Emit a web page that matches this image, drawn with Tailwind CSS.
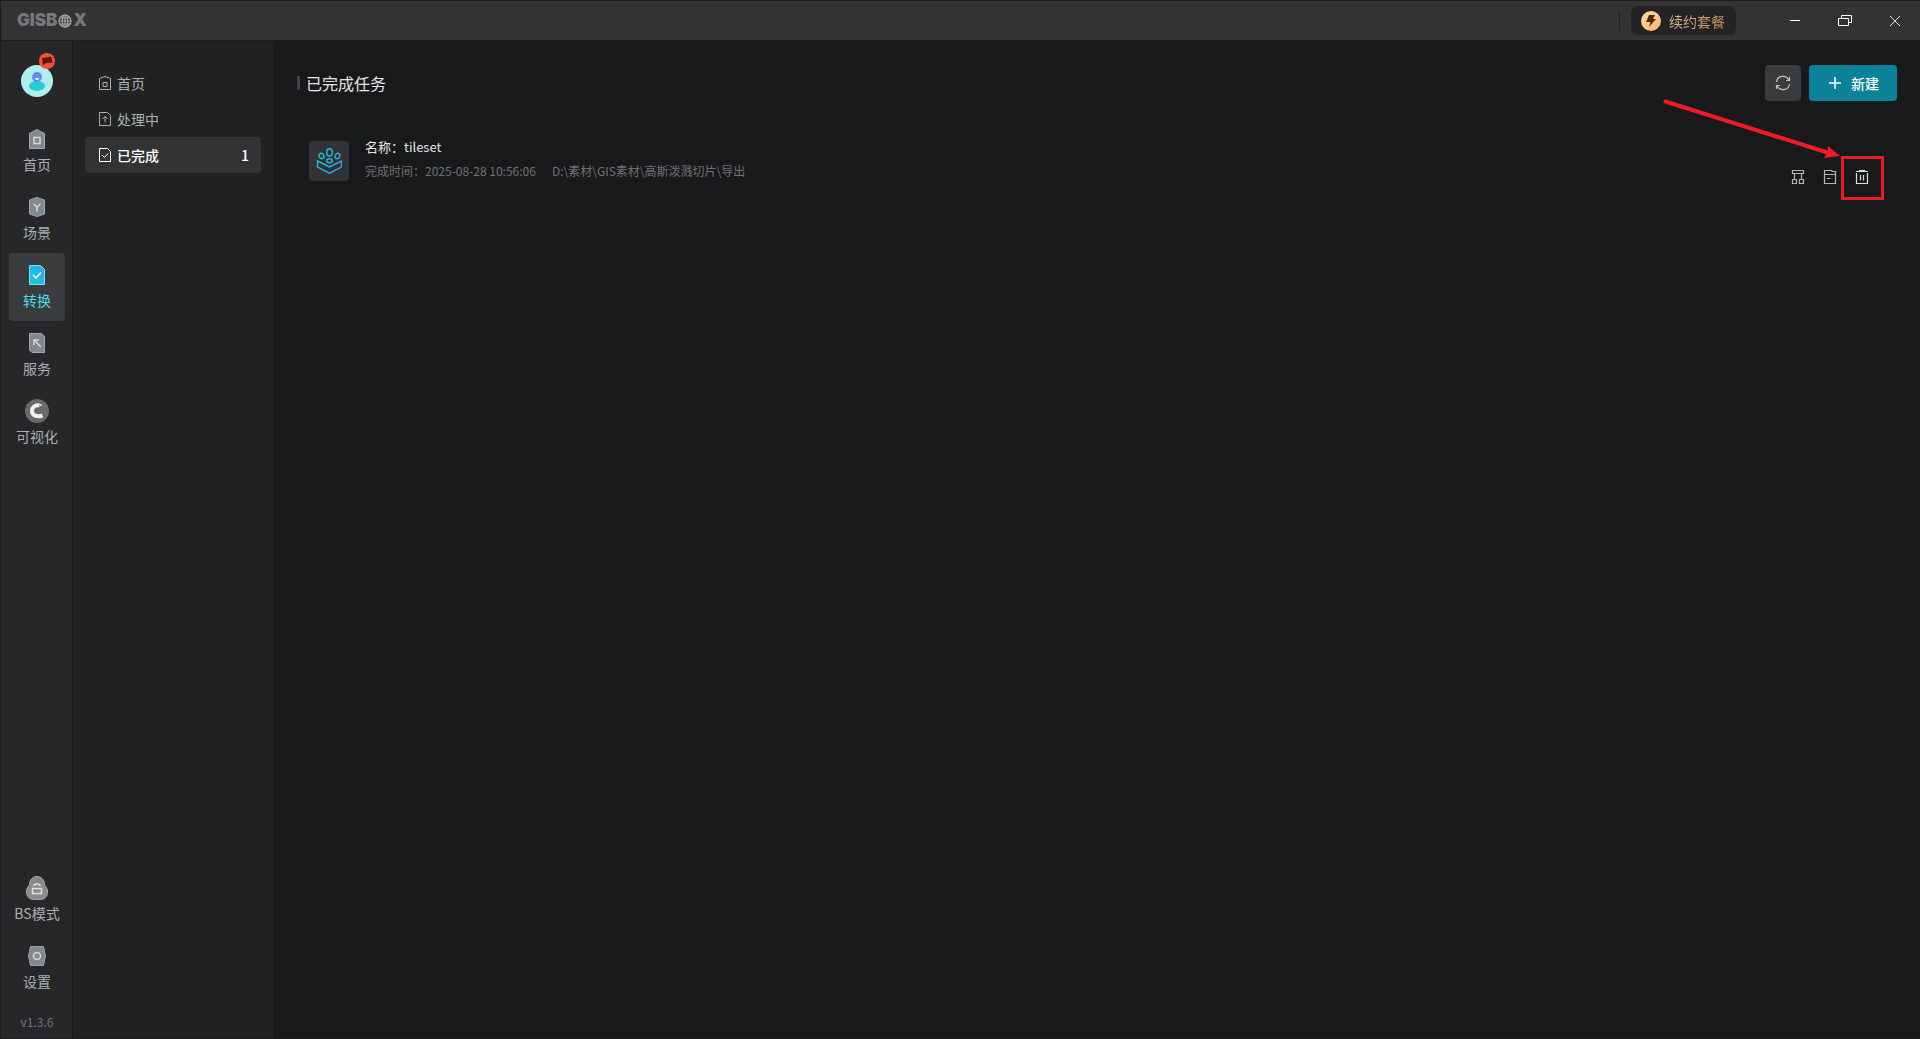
<!DOCTYPE html>
<html lang="zh-CN">
<head>
    <meta charset="UTF-8">
    <meta name="viewport" content="width=device-width, initial-scale=1.0">
    <title>GISBOX</title>
    <script src="https://cdn.jsdelivr.net/npm/@tailwindcss/browser@4"></script>
</head>
<body class="flex flex-col h-screen overflow-hidden border-l border-b border-[#1c1d1e] bg-[#18191b] font-['Noto_Sans_CJK_SC','Noto_Sans',sans-serif] text-sm text-[#a9b0b3]">

    <!-- Title bar -->
    <header class="flex items-center shrink-0 h-[41px] pl-4 border-t border-b border-[#1c1d1e] bg-[#323335]">
        <div class="flex items-center gap-px font-['Inter',sans-serif] text-[17px] leading-none font-black text-[#77787a]">
            <span>GISB</span>
            <svg class="w-[14px] h-[14px]" viewBox="0 0 14 14" fill="none" stroke="#a6a7a8" stroke-width="1.2">
                <circle cx="7" cy="7" r="6"/>
                <ellipse cx="7" cy="7" rx="2.8" ry="6"/>
                <path d="M7 1v12M1 7h12M2 4h10M2 10h10"/>
            </svg>
            <span>X</span>
        </div>
        <div class="ml-auto w-px h-5 bg-[#1f2021]"></div>
        <button class="flex items-center gap-2 ml-[10px] h-[31px] w-[107px] pl-[10px] rounded-lg border border-[#3d322b] bg-[#232224]">
            <svg class="w-5 h-5" viewBox="0 0 20 20">
                <defs>
                    <linearGradient id="gold" x1="0" y1="0" x2="1" y2="1">
                        <stop offset="0" stop-color="#ffe0ab"/>
                        <stop offset="1" stop-color="#fdb06b"/>
                    </linearGradient>
                </defs>
                <circle cx="10" cy="10" r="10" fill="url(#gold)"/>
                <path d="M8 4h6l-2 4h3l-7 8 1.500-5H5z" fill="#4a2a12"/>
            </svg>
            <span class="bg-linear-to-r from-[#d6bd90] to-[#c28d5c] bg-clip-text text-transparent">续约套餐</span>
        </button>
        <div class="flex ml-[33px]">
            <button aria-label="最小化" class="grid place-items-center w-[50px] h-10">
                <svg class="w-[14px] h-[14px]" viewBox="0 0 14 14" fill="none" stroke="#fff"><path d="M2 6.500h10"/></svg>
            </button>
            <button aria-label="还原" class="grid place-items-center w-[50px] h-10">
                <svg class="w-[14px] h-[14px]" viewBox="0 0 14 14" fill="none" stroke="#fff"><path d="M.5 4.500h10v7H.5zM3.500 4.500v-3h10v7h-3"/></svg>
            </button>
            <button aria-label="关闭" class="grid place-items-center w-[50px] h-10">
                <svg class="w-[14px] h-[14px]" viewBox="0 0 14 14" fill="none" stroke="#ddd"><path d="M2 2l10 10M12 2L2 12"/></svg>
            </button>
        </div>
    </header>

    <div class="flex flex-1 min-h-0">
        <!-- Main sidebar -->
        <aside class="flex flex-col items-center shrink-0 w-[72px] pt-6 pl-px border-r border-[#18191a] bg-[#272729]">
            <button aria-label="用户" class="relative w-8 h-8 mb-5">
                <svg class="w-8 h-8" viewBox="0 0 32 32">
                    <circle cx="16" cy="16" r="16" fill="#b0eeee"/>
                    <ellipse cx="16" cy="21" rx="8" ry="5" fill="#27cdd0"/>
                    <circle cx="16" cy="12" r="5" fill="#5c8df6"/>
                    <path d="M14 13h4a2 2 0 0 1-4 0z" fill="#fff"/>
                </svg>
                <svg class="absolute -top-3 left-[18px] w-4 h-4" viewBox="0 0 16 16">
                    <circle cx="8" cy="8" r="8" fill="#fb4e35"/>
                    <path d="M3 5c3 .5 6-2 9.500-1l1 6c-3-.7-5.500.5-7.500.5l-2 2z" fill="#541911"/>
                </svg>
            </button>
            <nav class="flex flex-col w-14">
                <a href="#" class="flex flex-col items-center h-[68px] pt-[10px] gap-[3px]">
                    <svg class="w-6 h-6" viewBox="0 0 24 24" fill="none">
                        <path d="M4.500 6.500L12 2.500l7.500 4v15h-15z" fill="#82898c" stroke="#a2aaad"/>
                        <path d="M9 10.500h6v6H9z" stroke="#d5d9da" stroke-width="1.500"/>
                    </svg>
                    <span class="leading-5">首页</span>
                </a>
                <a href="#" class="flex flex-col items-center h-[68px] pt-[10px] gap-[3px]">
                    <svg class="w-6 h-6" viewBox="0 0 24 24" fill="none">
                        <path d="M4.500 5L12 2.500 19.500 5v14L12 21.500 4.500 19z" fill="#82898c" stroke="#a2aaad"/>
                        <path d="M8.500 9l3.500 3 3.500-3M12 12v4.500" stroke="#d5d9da" stroke-width="1.500"/>
                    </svg>
                    <span class="leading-5">场景</span>
                </a>
                <a href="#" class="flex flex-col items-center h-[68px] pt-[10px] gap-[3px] rounded bg-[#3a3b3d] text-[#4fd8ec]">
                    <svg class="w-6 h-6" viewBox="0 0 24 24" fill="none">
                        <defs>
                            <linearGradient id="active" x1="0" y1="1" x2="1" y2="0">
                                <stop offset="0" stop-color="#0bd3d9"/>
                                <stop offset="1" stop-color="#3a9ff2"/>
                            </linearGradient>
                        </defs>
                        <path d="M4.500 2.500h11l4 4v15h-15z" fill="url(#active)" stroke="#7fdcf3"/>
                        <path d="M8 12l3 3 5-5.500" stroke="#fff" stroke-width="1.500"/>
                    </svg>
                    <span class="leading-5">转换</span>
                </a>
                <a href="#" class="flex flex-col items-center h-[68px] pt-[10px] gap-[3px]">
                    <svg class="w-6 h-6" viewBox="0 0 24 24" fill="none">
                        <path d="M4.500 2.500h12l3 3v16H7l-2.500-2.500z" fill="#82898c" stroke="#a2aaad"/>
                        <path d="M9 14V9h5M9 9l7 7" stroke="#d5d9da" stroke-width="1.500"/>
                    </svg>
                    <span class="leading-5">服务</span>
                </a>
                <a href="#" class="flex flex-col items-center h-[68px] pt-[10px] gap-[3px]">
                    <svg class="w-6 h-6" viewBox="0 0 24 24" fill="none">
                        <circle cx="12" cy="12" r="12" fill="#69696a"/>
                        <path d="M14.500 6.500C10 5.500 7 8.500 7 12c0 4.500 5 6.500 10.500 4.500" stroke="#f2f2f2" stroke-width="4"/>
                        <path d="M15 5h2v2h-2z" fill="#c9c9c9"/>
                    </svg>
                    <span class="leading-5">可视化</span>
                </a>
            </nav>
            <nav class="flex flex-col w-14 mt-auto">
                <a href="#" class="flex flex-col items-center h-[68px] pt-[10px] gap-[3px] whitespace-nowrap">
                    <svg class="w-6 h-6" viewBox="0 0 24 24" fill="none">
                        <path d="M12 .5c4.500 0 7.500 3.500 7.500 8.500 2 2 3 4 3 7 0 4.500-3 7.500-7 7.500h-7c-4 0-7-3-7-7.500 0-3 1-5 3-7C4.500 4 7.500.5 12 .5z" fill="#8a8b8d" stroke="#a5a6a8"/>
                        <path d="M7.500 12.500h9v5h-9zM9 10a3 2 0 0 1 6 0" stroke="#e0e1e2" stroke-width="1.500"/>
                    </svg>
                    <span class="leading-5">BS模式</span>
                </a>
                <a href="#" class="flex flex-col items-center h-[68px] pt-[10px] gap-[3px]">
                    <svg class="w-6 h-6" viewBox="0 0 24 24" fill="none">
                        <path d="M5.500 2.500h13l2 9.500-2 9.500h-13L3.500 12z" fill="#82898c" stroke="#98a2a6"/>
                        <circle cx="12" cy="12" r="3.500" stroke="#d5d9da" stroke-width="1.500"/>
                    </svg>
                    <span class="leading-5">设置</span>
                </a>
            </nav>
            <div class="mt-3 mb-2 text-xs leading-4 text-[#707375]">v1.3.6</div>
        </aside>

        <!-- Task categories -->
        <nav class="flex flex-col shrink-0 w-[200px] pt-6 px-3 bg-[#212322]">
            <a href="#" class="flex items-center h-9 px-3 gap-1 rounded">
                <svg class="w-4 h-4" viewBox="0 0 16 16" fill="none" stroke="currentColor">
                    <path d="M2.500 3.500L8 1.500l5.500 2v11h-11zM6 7.500h4v4H6z"/>
                </svg>
                <span>首页</span>
            </a>
            <a href="#" class="flex items-center h-9 px-3 gap-1 rounded">
                <svg class="w-4 h-4" viewBox="0 0 16 16" fill="none" stroke="currentColor">
                    <path d="M2.500 1.500h8l3 3v10h-11zM8 11.500V5.500M5.500 8L8 5.500 10.500 8"/>
                </svg>
                <span>处理中</span>
            </a>
            <a href="#" class="flex items-center h-9 px-3 gap-1 rounded bg-[#323335] font-medium text-white">
                <svg class="w-4 h-4" viewBox="0 0 16 16" fill="none" stroke="currentColor">
                    <path d="M2.500 1.500h8l3 3v10h-11zM5 8l2.500 2.500 3.500-4"/>
                </svg>
                <span>已完成</span>
                <span class="ml-auto">1</span>
            </a>
        </nav>

        <!-- Finished tasks -->
        <main class="flex-1 min-w-0 pt-6 pl-6 pr-[23px]">
            <div class="flex items-center h-9">
                <div class="w-[3px] h-[14px] bg-[#3f4546]"></div>
                <h1 class="ml-[6px] text-base text-[#e2e4e5]">已完成任务</h1>
                <button aria-label="刷新" class="grid place-items-center ml-auto w-9 h-9 rounded bg-[#3a3b3d]">
                    <svg class="w-4 h-4" viewBox="0 0 16 16" fill="none" stroke="#c0c2c3" stroke-width="1.200">
                        <path d="M1.500 7A6.500 6.500 0 0 1 13.800 5M14.500 9A6.500 6.500 0 0 1 2.200 11M14.500 2v3.500H11M1.500 14v-3.500H5"/>
                    </svg>
                </button>
                <button class="flex items-center justify-center ml-2 w-[88px] h-9 pl-0.5 gap-[10px] rounded bg-[#0c8299] font-medium text-white">
                    <svg class="w-3 h-3" viewBox="0 0 12 12" stroke="#fff" stroke-width="1.500"><path d="M6 0v12M0 6h12"/></svg>
                    <span>新建</span>
                </button>
            </div>

            <div class="flex mt-9 pl-3 pr-[27px]">
                <div class="grid place-items-center mt-1 w-10 h-10 rounded bg-[#323335]">
                    <svg class="w-[26px] h-[26px]" viewBox="0 0 26 26" fill="none" stroke="url(#tile)" stroke-width="1.400">
                        <defs>
                            <linearGradient id="tile" gradientUnits="userSpaceOnUse" x1="1" y1="4" x2="25" y2="22">
                                <stop offset="0" stop-color="#10d0cf"/>
                                <stop offset="1" stop-color="#3b97f3"/>
                            </linearGradient>
                        </defs>
                        <ellipse cx="13.500" cy="4.500" rx="2.800" ry="3.700"/>
                        <ellipse cx="5.500" cy="8" rx="2.300" ry="2.800" transform="rotate(-30 5.500 8)"/>
                        <ellipse cx="21.500" cy="8" rx="2.300" ry="2.800" transform="rotate(30 21.500 8)"/>
                        <ellipse cx="13.500" cy="12.700" rx="2.800" ry="2"/>
                        <path d="M1.500 13l12 6 12-6v6l-12 6.200-12-6.200z"/>
                    </svg>
                </div>
                <div class="ml-4 text-xs">
                    <p class="leading-5 text-[13px] text-[#e2e4e5]">名称：tileset</p>
                    <p class="flex gap-4 mt-1 leading-5 text-[#6f7173]"><span>完成时间：2025-08-28 10:56:06</span><span>D:\素材\GIS素材\高斯泼溅切片\导出</span></p>
                </div>
                <div class="relative flex items-center self-start gap-4 mt-8 ml-auto text-[#b3b5b6]">
                    <button aria-label="结构">
                        <svg class="w-4 h-4" viewBox="0 0 16 16" fill="none" stroke="currentColor" stroke-width="1.200">
                            <path d="M2.500 1.500h11v3h-11zM4.500 4.500v6M11.500 4.500v6M2.500 10.500h4v4h-4zM9.500 10.500h4v4h-4z"/>
                        </svg>
                    </button>
                    <button aria-label="打开目录">
                        <svg class="w-4 h-4" viewBox="0 0 16 16" fill="none" stroke="currentColor" stroke-width="1.200">
                            <path d="M2.500 1.500h7l1 1h3v12h-11zM2.500 5.500h11M5 9.500h3.500"/>
                        </svg>
                    </button>
                    <button aria-label="删除" class="text-[#dcdddd]">
                        <svg class="w-4 h-4" viewBox="0 0 16 16" fill="none" stroke="currentColor" stroke-width="1.200">
                            <path d="M2 2.500h12M5.500 2.500v-1h5v1M2.500 4v10.500h11V4M6.500 6v5.500M9.500 6v5.500"/>
                        </svg>
                    </button>
                    <!-- Pointer to the delete button -->
                    <svg class="absolute -top-[70px] -right-[15px] w-[222px] h-[104px] pointer-events-none" viewBox="0 0 222 104" fill="none">
                        <path d="M2.500 2.500l162 51" stroke="#ed1c24" stroke-width="4" stroke-linecap="round"/>
                        <path d="M177 57l-12-10-.5 6-3.500 6z" fill="#ed1c24"/>
                        <rect x="179.500" y="58.500" width="40" height="41" stroke="#ed1c24" stroke-width="3"/>
                    </svg>
                </div>
            </div>
        </main>
    </div>
</body>
</html>
